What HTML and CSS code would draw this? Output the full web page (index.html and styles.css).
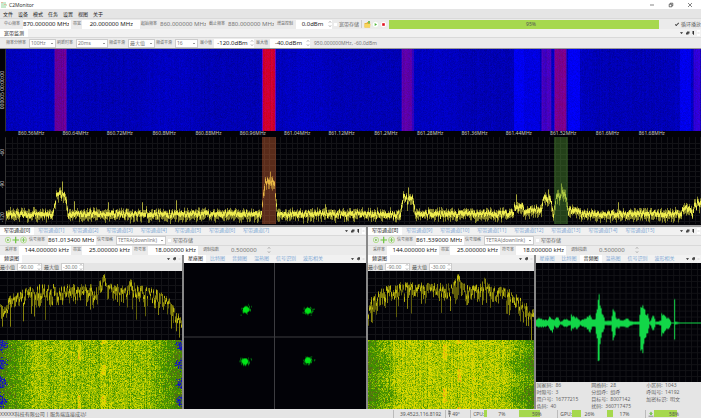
FILE: index.html
```html
<!DOCTYPE html>
<html lang="zh-CN">
<head>
  <meta charset="UTF-8">
  <meta name="viewport" content="width=device-width, initial-scale=1.0">
  <title>C2Monitor</title>
  <link rel="stylesheet" href="styles.css">
</head>
<body>
  <svg class="defs" aria-hidden="true">
    <symbol id="i-arrows" viewBox="0 0 4 8"><path d="M1 2.5L2 1.5L3 2.5M1 5.5L2 6.5L3 5.5" fill="none" stroke="#777" stroke-width=".7"/></symbol>
    <symbol id="i-dock" viewBox="0 0 21 6">
      <path d="M1 2.2h3L2.5 4z" fill="#222"/>
      <path d="M8 1.5h2.500v2h-2.500zM7 2.500h2.500v2h-2.500z" fill="#444"/>
      <path d="M13.500 1h1.500v3h-1.500zM14 4h.7v1h-.7z" fill="#333"/>
      <path d="M18 0h3v6h-3z" fill="#fff"/><path d="M19 2.500l1 1m0-1l-1 1" stroke="#aaa" stroke-width=".5"/>
    </symbol>
    <symbol id="i-dock2" viewBox="0 0 15 6">
      <path d="M1 2.2h3L2.5 4z" fill="#222"/>
      <path d="M7 2.200h2v1.500h-2zM7.800 1.200h2.200v2l-1.500 1.500v-1.500h-.7z" fill="#444"/>
      <path d="M12 0h3v6h-3z" fill="#f4f4f4"/><path d="M13 2.500l1 1m0-1l-1 1" stroke="#aaa" stroke-width=".5"/>
    </symbol>
    <symbol id="i-add" viewBox="0 0 22 8">
      <g fill="none" stroke="#a8dc7c" stroke-width=".8"><circle cx="3" cy="4" r="2.7"/><circle cx="18.5" cy="4" r="3"/></g>
      <path d="M2.300 2.800v2.400L4.400 4z" fill="#5cb82c"/>
      <path d="M7.500 4h6.500M10.700 .8v6.400" stroke="#6cc43c" stroke-width="1.200"/>
      <path d="M16.500 4h4M18.500 2v4" stroke="#6cc43c" stroke-width=".8"/>
    </symbol>
  </svg>

  <header class="title-bar">
    <svg class="logo" viewBox="0 0 6 6"><path d="M0 1h5M0 3h6M0 5h5" stroke="#8fd49a" stroke-width="1"/><path d="M0 0h2v1h-2zM3 2h2v1h-2z" fill="#e6b9a0"/></svg>
    <h1>C2Monitor</h1>
    <div class="win-buttons">
      <button aria-label="最小化"><svg viewBox="0 0 6 6"><path d="M1 3h4" stroke="#333" stroke-width=".6"/></svg></button>
      <button aria-label="还原"><svg viewBox="0 0 6 6"><path d="M1.200 2.200h2.600v2.600h-2.600zM2.200 2.200v-1h2.600v2.600h-1" fill="none" stroke="#222" stroke-width=".6"/></svg></button>
      <button aria-label="关闭"><svg viewBox="0 0 6 6"><path d="M1 1l4 4M5 1l-4 4" stroke="#333" stroke-width=".6"/></svg></button>
    </div>
  </header>

  <nav class="menu">
    <a href="#">文件</a><a href="#">设备</a><a href="#">模式</a><a href="#">任务</a><a href="#">设置</a><a href="#">视图</a><a href="#">关于</a>
  </nav>

  <div class="toolbar">
    <label for="center">中心频率</label><input class="num w48" id="center" value="870.000000 MHz">
    <label class="l2" for="bw">带宽</label><input class="num w58 inset" id="bw" value="20.000000 MHz">
    <label for="start">起始频率</label><input class="num w48 plain" id="start" value="860.000000 MHz" readonly>
    <label for="stop">截止频率</label><input class="num w48 plain" id="stop" value="880.000000 MHz" readonly>
    <label for="gain">增益控制</label><span class="spin flat w36"><input id="gain" value="0.0dBm"><svg><use href="#i-arrows"/></svg></span>
    <label class="check"><input type="checkbox">宽带存储</label>
    <span class="sep"></span>
    <button class="tool" aria-label="打开"><svg viewBox="0 0 7 7"><path d="M.5 2h2l.6-1h3v5.500h-5.600z" fill="#e9b53a"/><path d="M1 3h5.500l-.6 3.500h-5.400z" fill="#f8d65c"/><path d="M4 0h2v2.500h-2z" fill="#79bd5c"/></svg></button>
    <button class="tool" aria-label="播放"><svg viewBox="0 0 7 7"><circle cx="3.500" cy="3.500" r="3.200" fill="#fff" stroke="#ccdcc4" stroke-width=".4"/><path d="M2.700 2v3l2.300-1.500z" fill="#4fb83a"/></svg></button>
    <button class="tool" aria-label="停止"><svg viewBox="0 0 7 7"><circle cx="3.500" cy="3.500" r="3.200" fill="#fff" stroke="#e4cccc" stroke-width=".4"/><path d="M2.200 2.200h2.600v2.600h-2.600z" fill="#e01020"/></svg></button>
    <div class="bar play"><i style="width:95%"></i><span>95%</span></div>
    <label class="check ticked"><input type="checkbox" checked>循环播放</label>
  </div>

  <div class="tabs">
    <button class="tab on">宽带监测</button>
    <svg class="dock"><use href="#i-dock"/></svg>
  </div>

  <div class="toolbar second indent">
    <label class="l5" for="rbw">频率分辨率</label><select class="w27" id="rbw"><option>100Hz</option></select>
    <label for="fps">刷新时率</label><select class="w32" id="fps"><option>20ms</option></select>
    <label for="smooth">频谱平滑</label><select class="w27" id="smooth"><option>最大值</option></select>
    <label for="count">频谱平滑</label><select class="w23" id="count"><option>16</option></select>
    <label class="l3" for="min">最小值</label><span class="spin flat w40"><input id="min" value="-120.0dBm"><svg><use href="#i-arrows"/></svg></span>
    <label class="l3" for="max">最大值</label><span class="spin flat w40"><input id="max" value="-40.0dBm"><svg><use href="#i-arrows"/></svg></span>
    <output>950.000000MHz, -60.0dBm</output>
  </div>

  <main>
    <section class="wide">
      <div class="v-axis time"><span>000005 00:00:00</span></div>
      <div class="cv"><canvas id="wideFall"></canvas></div>
      <div class="h-axis">
        <span>860.56MHz</span><span>860.64MHz</span><span>860.72MHz</span><span>860.8MHz</span><span>860.88MHz</span><span>860.96MHz</span><span>861.04MHz</span><span>861.12MHz</span><span>861.2MHz</span><span>861.28MHz</span><span>861.36MHz</span><span>861.44MHz</span><span>861.52MHz</span><span>861.6MHz</span><span>861.68MHz</span>
      </div>
      <div class="v-axis level"><span>-60</span><span>-90</span><span>-120</span></div>
      <div class="cv"><canvas id="wideSpec"></canvas></div>
    </section>

    <section class="narrow">
      <div class="channel">
        <div class="tabs">
          <button class="tab on">窄带通道[0]</button><button class="tab">窄带通道[1]</button><button class="tab">窄带通道[2]</button><button class="tab">窄带通道[3]</button><button class="tab">窄带通道[4]</button><button class="tab">窄带通道[5]</button><button class="tab">窄带通道[6]</button><button class="tab">窄带通道[7]</button>
          <svg class="dock"><use href="#i-dock"/></svg>
        </div>
        <div class="toolbar">
          <button class="add" aria-label="添加"><svg><use href="#i-add"/></svg></button>
          <label for="f0">信号频率</label><input class="num w48" id="f0" value="861.013400 MHz">
          <label for="t0">信号规格</label><select class="w50" id="t0"><option>TETRA(downlink)</option></select>
          <label class="check"><input type="checkbox">窄带存储</label>
        </div>
        <div class="toolbar second">
          <label class="l3" for="s0">采样率</label><input class="num w52" id="s0" value="144.000000 kHz">
          <label class="l2" for="b0">带宽</label><input class="num w50" id="b0" value="25.000000 kHz">
          <label class="l3" for="y0">符号率</label><input class="num w50" id="y0" value="18.000000 kHz">
          <label class="mod" for="m0">调制指数</label><span class="spin ghost w48"><input id="m0" value="0.500000"><svg><use href="#i-arrows"/></svg></span>
        </div>
        <div class="views">
          <div class="view">
            <div class="tabs sub"><button class="tab on">频谱图</button><svg class="dock small"><use href="#i-dock2"/></svg></div>
            <div class="range">
              <label for="n0">最小值</label><span class="spin w25"><input id="n0" value="-90.00"><svg><use href="#i-arrows"/></svg></span>
              <label for="x0">最大值</label><span class="spin w23"><input id="x0" value="-30.00"><svg><use href="#i-arrows"/></svg></span>
            </div>
            <div class="cv"><canvas id="spec0"></canvas></div>
            <div class="cv"><canvas id="fall0"></canvas></div>
          </div>
          <div class="view">
            <div class="tabs sub"><button class="tab on">星座图</button><button class="tab">比特图</button><button class="tab">音频图</button><button class="tab">温热图</button><button class="tab">信号识别</button><button class="tab">波形相关</button><svg class="dock small"><use href="#i-dock2"/></svg></div>
            <div class="cv"><canvas id="stars"></canvas></div>
          </div>
        </div>
      </div>

      <div class="channel">
        <div class="tabs">
          <button class="tab on">窄带通道[8]</button><button class="tab">窄带通道[9]</button><button class="tab">窄带通道[10]</button><button class="tab">窄带通道[11]</button><button class="tab">窄带通道[12]</button><button class="tab">窄带通道[13]</button><button class="tab">窄带通道[14]</button><button class="tab">窄带通道[15]</button>
          <svg class="dock"><use href="#i-dock"/></svg>
        </div>
        <div class="toolbar">
          <button class="add" aria-label="添加"><svg><use href="#i-add"/></svg></button>
          <label for="f8">信号频率</label><input class="num w48" id="f8" value="861.539000 MHz">
          <label for="t8">信号规格</label><select class="w50" id="t8"><option>TETRA(downlink)</option></select>
          <label class="check"><input type="checkbox">窄带存储</label>
        </div>
        <div class="toolbar second">
          <label class="l3" for="s8">采样率</label><input class="num w52" id="s8" value="144.000000 kHz">
          <label class="l2" for="b8">带宽</label><input class="num w50" id="b8" value="25.000000 kHz">
          <label class="l3" for="y8">符号率</label><input class="num w50" id="y8" value="18.000000 kHz">
          <label class="mod" for="m8">调制指数</label><span class="spin ghost w48"><input id="m8" value="0.500000"><svg><use href="#i-arrows"/></svg></span>
        </div>
        <div class="views">
          <div class="view">
            <div class="tabs sub"><button class="tab on">频谱图</button><svg class="dock small"><use href="#i-dock2"/></svg></div>
            <div class="range">
              <label for="n8">最小值</label><span class="spin w25"><input id="n8" value="-90.00"><svg><use href="#i-arrows"/></svg></span>
              <label for="x8">最大值</label><span class="spin w23"><input id="x8" value="-30.00"><svg><use href="#i-arrows"/></svg></span>
            </div>
            <div class="cv"><canvas id="spec8"></canvas></div>
            <div class="cv"><canvas id="fall8"></canvas></div>
          </div>
          <div class="view">
            <div class="tabs sub"><button class="tab">星座图</button><button class="tab">比特图</button><button class="tab on">音频图</button><button class="tab">温热图</button><button class="tab">信号识别</button><button class="tab">波形相关</button><svg class="dock small"><use href="#i-dock2"/></svg></div>
            <div class="cv"><canvas id="audio"></canvas></div>
            <div class="info">
              <span>国家码:  86</span><span>网络码:  28</span><span>小区码:  1043</span>
              <span>时隙号:  3</span><span>分组呼:  组呼</span><span>呼叫号:  14192</span>
              <span>用户号:  16777215</span><span>目标号:  8007142</span><span>加密标识:  明文</span>
              <span>色码:  40</span><span>扰码:  360717475</span>
            </div>
          </div>
        </div>
      </div>
    </section>
  </main>

  <footer class="status">
    <span class="msg">XXXXX科技有限公司 | 服务端连接成功!</span>
    <span class="cell gps">39.4523,116.8192</span>
    <span class="cell temp"><svg viewBox="0 0 3 7"><path d="M.5 1.500h2M.5 3.500h2M1 0v5M2 1v4M1.500 5v2" stroke="#555" stroke-width=".6"/></svg>49°</span>
    <span class="cell">CPU:<span class="bar"><i style="width:7%"></i><span>7%</span></span><span class="bar"><i style="width:59%"></i><span>59%</span></span></span>
    <span class="cell">GPU:<span class="bar"><i style="width:26%"></i><span>26%</span></span><span class="bar"><i style="width:17%"></i><span>17%</span></span></span>
    <span class="cell disk"><svg viewBox="0 0 6 6"><path d="M3 .5L5 3h-1v1h-2v-1h-1z" fill="#7cc45c"/><path d="M.5 5.200h5" stroke="#777" stroke-width=".8"/></svg><span class="bar"><i style="width:58%"></i><span>58%</span></span></span>
  </footer>

  <script src="script.js"></script>
</body>
</html>
```
FILE: styles.css
```css
* {
  box-sizing: border-box;
}

body {
  display: flex;
  flex-direction: column;
  height: 100vh;
  margin: 0;
  overflow: hidden;
  background: #e5e5e5;
  color: #333;
  font: 5px/6px "Noto Sans", "Noto Sans CJK SC", sans-serif;
  white-space: nowrap;
}

button, input, select {
  margin: 0;
  padding: 0;
  border: 0;
  border-radius: 0;
  background: none;
  color: inherit;
  font: inherit;
  min-width: 0;
}

svg { display: block; flex: none; }
.defs { position: absolute; width: 0; height: 0; }

/* title + menu */
.title-bar {
  display: flex;
  align-items: center;
  flex: none;
  height: 9px;
  padding: 0 8px 0 1px;
  gap: 2px;
  background: #fff;
}

.title-bar h1 { margin: 0; font-size: 5px; font-weight: normal; }
.logo { width: 6px; height: 6px; }
.win-buttons { display: flex; gap: 13px; margin-left: auto; }
.win-buttons svg { width: 6px; height: 6px; }

.menu {
  display: flex;
  align-items: center;
  gap: 5px;
  flex: none;
  height: 9px;
  padding: 0 3px;
}

.menu a { color: #222; text-decoration: none; }

/* toolbars */
.toolbar {
  display: flex;
  align-items: center;
  gap: 1px;
  flex: none;
  height: 11px;
  padding-left: 4px;
  background: #ebebeb;
  border-top: 1px solid #d9d9d9;
}

.toolbar label {
  flex: none;
  width: 18px;
  color: #666;
  font-size: 4px;
}

.toolbar label.l2 { width: 9px; padding-left: 1px; }
.toolbar label.l3 { width: 14px; padding-left: 1px; }
.toolbar label.l5 { width: 22px; }
.toolbar label.mod { width: 23px; padding-left: 4px; }
.indent { padding-left: 6px; }

.num {
  height: 9px;
  padding-right: 2px;
  background: #fff;
  color: #222;
  font-size: 6px;
  text-align: right;
}

.num.inset { padding-right: 7px; }
.num.plain { background: none; color: #777; }

.w23 { width: 23px; }
.w25 { width: 25px; }
.w27 { width: 27px; }
.w32 { width: 32px; }
.w36 { width: 36px; }
.w40 { width: 40px; }
.w48 { width: 48px; }
.w50 { width: 50px; }
.w52 { width: 52px; }
.w58 { width: 58px; }

select {
  height: 9px;
  padding-left: 1px;
  appearance: none;
  border: 1px solid #ccc;
  background: linear-gradient(#999, #999) right 2px center / 2px 1px no-repeat #fff;
  color: #777;
}

.spin {
  display: flex;
  align-items: center;
  height: 8px;
  border: 1px solid #ccc;
  background: #fff;
  color: #777;
}

.spin input { flex: 1; width: 0; padding-left: 1px; }
.spin svg { width: 4px; height: 8px; }
.spin.flat { height: 9px; border: 0; color: #222; font-size: 6px; }
.spin.flat input { text-align: center; }
.spin.ghost { border: 0; background: none; font-size: 6px; }
.spin.ghost input { padding-left: 8px; }

.toolbar .check {
  display: flex;
  align-items: center;
  gap: 2px;
  width: auto;
  padding-left: 1px;
  font-size: 5px;
}

.check input {
  width: 3px;
  height: 3px;
  appearance: none;
  background: #fff;
}

.ticked input {
  width: 4px;
  height: 2px;
  border: solid #444;
  border-width: 0 0 1px 1px;
  background: none;
  transform: rotate(-45deg);
}

.sep { width: 1px; height: 8px; margin: 0 1px; background: #ccc; }
.tool { width: 7px; }
.tool svg { width: 7px; height: 7px; }
.add { width: 24px; padding-left: 1px; }
.add svg { width: 22px; height: 8px; }
output { padding-left: 3px; color: #777; }

.bar {
  display: grid;
  position: relative;
  height: 7px;
  align-items: center;
  text-align: center;
}

.bar i, .bar span { grid-area: 1 / 1; }
.bar i { height: 7px; background: #a6d84e; }
.bar span { position: relative; color: #555; }
.bar.play { flex: 1; height: 9px; margin-left: 1px; }
.bar.play i { height: 9px; }

/* tabs */
.tabs {
  display: flex;
  flex: none;
  height: 8px;
  background: #f1f1f1;
}

.tab {
  padding: 0 4px;
  color: #7fa8d4;
  line-height: 7px;
}

.tab.on { background: #fff; color: #222; }
.sub .tab { padding: 0 3px 0 4px; }
.dock { width: 21px; height: 6px; margin: 1px 1px 0 auto; }
.dock.small { width: 15px; }

/* charts */
main {
  display: grid;
  flex: 1;
  grid-template-rows: 179fr 183fr;
  min-height: 0;
}

.cv { position: relative; min-width: 0; min-height: 0; background: #020207; }
.cv canvas { position: absolute; inset: 0; width: 100%; height: 100%; }

.wide {
  display: grid;
  grid-template: 83fr 6px 88fr / 6px 1fr;
  min-height: 0;
  border-top: 1px solid #999;
  border-bottom: 2px solid #999;
  background: #020207;
  color: #ccc;
}

.h-axis {
  display: grid;
  grid-template-columns: repeat(15, 1fr);
  grid-column: 1 / 3;
  padding: 0 27px 0 9px;
  line-height: 5px;
  text-align: center;
}

.v-axis {
  display: flex;
  align-items: center;
  justify-content: center;
  min-height: 0;
  border-left: 1px solid #333;
  writing-mode: vertical-rl;
  transform: rotate(180deg);
  line-height: 5px;
}

.level { justify-content: space-between; flex-direction: row-reverse; padding: 2px 0 12px; }

.narrow {
  display: grid;
  grid-template-columns: 366fr 333fr;
  gap: 2px;
  min-height: 0;
  background: #888;
}

.channel {
  display: flex;
  flex-direction: column;
  min-width: 0;
  min-height: 0;
  background: #e5e5e5;
}

.channel .toolbar { height: 10px; }

.views {
  display: grid;
  flex: 1;
  grid-template-columns: 1fr 1fr;
  gap: 2px;
  min-height: 0;
  background: #888;
}

.view {
  display: flex;
  flex-direction: column;
  min-width: 0;
  min-height: 0;
}

.view .cv { flex: 1; }

.range {
  display: flex;
  align-items: center;
  gap: 2px;
  height: 8px;
  background: #e5e5e5;
  color: #555;
}

.info {
  display: grid;
  grid-template-columns: repeat(3, 1fr);
  row-gap: 1px;
  padding: 0 0 0 1px;
  background: #e5e5e5;
  color: #666;
  white-space: pre;
}

/* status bar */
.status {
  display: flex;
  align-items: center;
  flex: none;
  height: 9px;
  padding-right: 7px;
  color: #555;
}

.msg { margin-right: auto; }

.cell {
  display: flex;
  align-items: center;
  height: 8px;
  padding: 0 3px 0 2px;
  border-left: 1px solid #bbb;
}

.cell .bar { width: 35px; }
.gps { padding: 0 4px 0 6px; }
.temp { width: 25px; gap: 1px; }
.temp svg { width: 3px; height: 7px; }
.disk { padding-right: 0; }
.disk svg { width: 6px; height: 6px; }
.disk .bar { width: 40px; }
```
FILE: script.js
```js
let seed = 7;

function rnd() {
  seed = (seed * 16807) % 2147483647;
  return seed / 2147483647;
}

function gauss() {
  return rnd() + rnd() + rnd() - 1.5;
}

function open2d(id) {
  const c = document.getElementById(id);
  c.width = c.clientWidth;
  c.height = c.clientHeight;
  return [c.getContext("2d"), c.width, c.height];
}

// linear interpolation over [x, y] points
function curve(pts, x) {
  for (let i = 1; i < pts.length; i++) {
    if (x <= pts[i][0]) {
      const [x0, y0] = pts[i - 1];
      const [x1, y1] = pts[i];
      return y0 + (y1 - y0) * (x - x0) / (x1 - x0);
    }
  }
  return pts[pts.length - 1][1];
}

function grid(g, w, h, step) {
  g.fillStyle = "#131317";
  for (let x = step; x < w; x += step) g.fillRect(Math.round(x), 0, 1, h);
  for (let y = step; y < h; y += step) g.fillRect(0, Math.round(y), w, 1);
}

// from, to, r, g, b on a 695 wide band
const bands = [
  [48, 61, 105, 0, 150], [256, 270, 208, 0, 48], [395, 408, 92, 0, 170],
  [507, 518, 0, 0, 240], [518, 534, 0, 0, 222], [535, 546, 68, 0, 190],
  [548, 561, 125, 0, 140], [562, 574, 0, 0, 242], [674, 685, 0, 0, 235],
  [687, 695, 48, 0, 215]
];

function wideFall() {
  const [g, w, h] = open2d("wideFall");
  for (let x = 0; x < w; x++) {
    const u = x / w * 695;
    let c = [0, 0, 180 + gauss() * 7 + Math.max(0, Math.sin(u / 21)) * 14];
    for (const b of bands) {
      if (u >= b[0] && u < b[1]) {
        const edge = u - b[0] < 1 || b[1] - u < 2;
        c = [b[2] * (edge ? .5 : 1) + gauss() * (b[2] ? 14 : 0), 0, edge && b[2] ? 190 : b[4]];
      }
    }
    for (let y = 0; y < h; y++) {
      const n = gauss() * 20;
      g.fillStyle = `rgb(${c[0] | 0},0,${(c[2] + n) | 0})`;
      g.fillRect(x, y, 1, 1);
    }
  }
}

function wideSpec() {
  const [g, w, h] = open2d("wideSpec");
  grid(g, w, h, 5.6);
  const floor = 78;
  const humps = [
    [48, 61, 20], [256, 270, 32], [395, 408, 17], [507, 518, 7], [518, 534, 4],
    [535, 546, 15], [548, 561, 20], [562, 574, 4], [675, 685, 5], [687, 699, 12]
  ];
  const spikes = { 68: 65, 102: 66, 136: 66, 170: 64, 319: 68, 510: 58, 542: 53, 612: 66, 402: 51, 56: 45, 264: 35, 555: 47 };
  for (let x = 0; x < w; x++) {
    const u = x / w * 695;
    let lift = 0;
    for (const b of humps) {
      if (u >= b[0] && u <= b[1]) {
        const t = (u - b[0]) / (b[1] - b[0]);
        lift = b[2] * Math.min(1, .3 + Math.sin(Math.PI * t) * 1.4);
      }
    }
    const mid = floor - lift + gauss() * (lift > 10 ? 4 : 2);
    const up = 2 + rnd() * 4;
    const down = 2 + rnd() * (lift > 10 ? 8 : 6);
    g.fillStyle = "#85832c";
    g.fillRect(x, (mid - up) * h / 88, 1, (up + down) * h / 88);
    g.fillStyle = "#eeec50";
    g.fillRect(x, (mid - 1 - rnd() * 2) * h / 88, 1, (3 + rnd() * 2) * h / 88);
  }
  g.fillStyle = "#a8a63a";
  for (const s in spikes) g.fillRect(s * w / 695, spikes[s] * h / 88, 1, 10 * h / 88);
  g.fillStyle = "rgba(220,105,55,.4)";
  g.fillRect(256 * w / 695, 0, 14 * w / 695, h);
  g.fillStyle = "rgba(80,150,50,.42)";
  g.fillRect(548 * w / 695, 0, 14 * w / 695, h);
}

// envelope of a narrow channel, x and y on a 182 x 69 area
function narrowSpec(id, top) {
  const [g, w, h] = open2d(id);
  grid(g, w, h, 7);
  for (let x = 0; x < w; x++) {
    const u = x / w * 182;
    const y = curve(top, u) + rnd() * rnd() * 15;
    let len = 3 + rnd() * 11;
    if (rnd() < .2) len += 5 + rnd() * 13;
    g.fillStyle = rnd() < .5 ? "#5f5d0a" : "#86820c";
    g.fillRect(x, y * h / 69, 1, len * h / 69);
    if (rnd() < .6) {
      g.fillStyle = "#bdb80e";
      g.fillRect(x, (y + rnd() * 5) * h / 69, 1, (2 + rnd() * 3) * h / 69);
    }
  }
}

function narrowFall(id, hot, blue, level) {
  const [g, w, h] = open2d(id);
  const stripes = [];
  for (let x = 0; x < w; x++) stripes.push(gauss() * .1);
  for (let y = 0; y < h; y++) {
    const wob = blue ? gauss() * 2 : Math.sin(y / 5) * 6 + gauss() * 3;
    for (let x = 0; x < w; x++) {
      const u = x / w * 182;
      const d = Math.min(u, 182 - u);
      let v = level + stripes[x] + gauss() * .3 - Math.max(0, 34 - d - wob) * .014;
      for (const p of hot) {
        if (Math.abs(u - p[0]) < 2 && Math.sin(y / p[1] + p[2]) > .5) v += .3;
      }
      if (blue && d < 8 && Math.sin(y / 3) * 4 + 2 + gauss() * 4 > d) v = -1;
      let c;
      if (v < -.5) c = rnd() < .6 ? [20, 20, 190] : [60, 90, 70];
      else if (v < .1) c = [85, 110, 20];
      else if (v < .4) c = [40 + v * 120, 130 + v * 60, 0];
      else if (v < .7) c = [115 + (v - .4) * 230, 170 + (v - .4) * 110, 0];
      else if (v < 1.08) c = [205 + (v - .7) * 90, 215, 0];
      else c = [242, 160, 15];
      g.fillStyle = `rgb(${c[0] | 0},${c[1] | 0},${c[2]})`;
      g.fillRect(x, y, 1, 1);
    }
  }
}

function stars() {
  const [g, w, h] = open2d("stars");
  g.fillStyle = "#3c3c40";
  g.fillRect(Math.round(w / 2) - 1, 0, 1, h);
  g.fillRect(0, Math.round(h / 2), w, 1);
  const spots = [[62, 47], [124, 48], [61, 99], [124, 98]];
  for (const s of spots) {
    const cx = s[0] * w / 182;
    const cy = s[1] * h / 147;
    g.fillStyle = "#00f01c";
    g.beginPath();
    g.arc(cx, cy, 3, 0, 7);
    g.fill();
    g.fillStyle = "rgba(0,225,25,.7)";
    for (let i = 0; i < 60; i++) g.fillRect(cx + gauss() * 5, cy + gauss() * 4, 1, 1);
  }
}

function audio() {
  const [g, w, h] = open2d("audio");
  grid(g, w, h, 6);
  // x, amplitude above, amplitude below on a 166 x 120 area
  const env = [
    [0, 3, 3], [3, 6, 5], [7, 3, 4], [11, 3, 3], [13, 6, 5], [16, 4, 11], [18, 3, 3], [21, 7, 6], [24, 1, 1],
    [29, 4, 4], [34, 2, 2], [35, 9, 8], [38, 7, 5], [41, 5, 6], [44, 2, 2], [49, 5, 5], [51, 6, 6], [54, 9, 11],
    [56, 4, 4], [59, 4, 4], [61, 16, 18], [62, 32, 53], [63, 29, 38], [65, 15, 15], [67, 9, 10], [69, 2, 2],
    [75, 2, 2], [77, 15, 19], [79, 14, 16], [80, 5, 5], [83, 4, 5], [87, 2, 3], [91, 5, 5], [94, 2, 3],
    [98, 1, 1], [103, 1, 1], [105, 16, 28], [107, 18, 31], [109, 15, 17], [110, 8, 14], [112, 9, 10], [114, 1, 1],
    [118, 9, 9], [120, 1, 1], [125, 2, 2], [126, 11, 15], [129, 7, 8], [134, 4, 5], [136, 0, 0], [138, 0, 0],
    [139, 29, 20], [140, 1, 1], [144, 0, 0], [166, 0, 0]
  ];
  const up = env.map(e => [e[0], e[1]]);
  const down = env.map(e => [e[0], e[2]]);
  g.fillStyle = "#12d748";
  for (let x = 0; x < w; x++) {
    const u = x / w * 166;
    const k = .7 + rnd() * .3;
    const a = curve(up, u) * k * h / 120;
    const b = curve(down, u) * k * h / 120;
    g.fillRect(x, h / 2 - a, 1, a + b + 1);
  }
}

function draw() {
  seed = 7;
  wideFall();
  wideSpec();
  narrowSpec("spec0", [[0, 33], [5, 36], [8, 25], [20, 18], [40, 13], [97, 13], [103, 0], [107, 12], [127, 14], [131, 6], [136, 14], [155, 16], [168, 26], [176, 38], [182, 48]]);
  narrowSpec("spec8", [[0, 36], [3, 25], [12, 18], [30, 11], [92, 12], [99, 0], [104, 12], [122, 14], [127, 6], [133, 13], [155, 18], [168, 27], [182, 38]]);
  narrowFall("fall0", [[79, 8, 0], [103, 5, 2]], true, .55);
  narrowFall("fall8", [[84, 7, 0], [99, 6, 2]], false, .64);
  stars();
  audio();
}

draw();
window.addEventListener("resize", draw);
```
